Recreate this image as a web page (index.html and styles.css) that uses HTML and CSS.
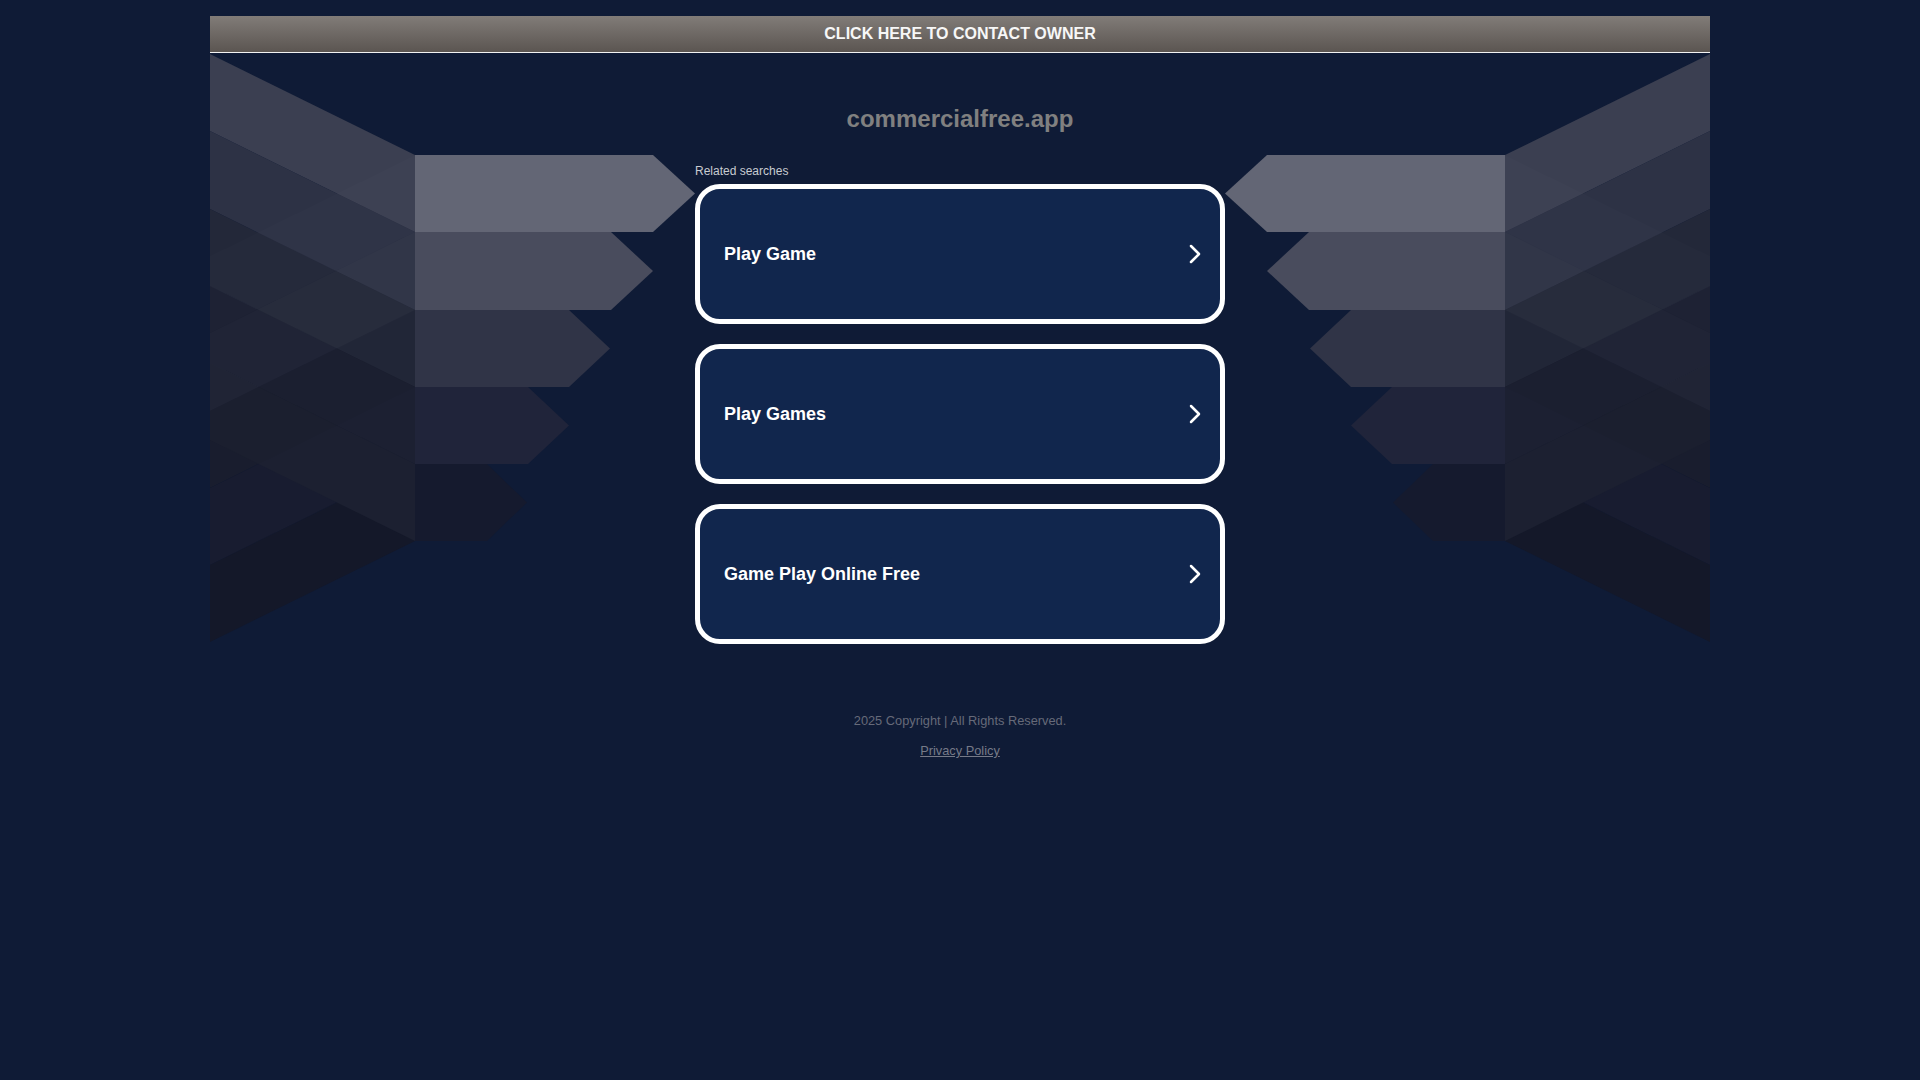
FILE: index.html
```html
<!DOCTYPE html>
<html lang="en">
<head>
<meta charset="utf-8">
<title>commercialfree.app</title>
<link rel="stylesheet" href="styles.css">
</head>
<body>
<div class="page">
  <a class="contact-bar" href="#">CLICK HERE TO CONTACT OWNER</a>
  <div class="stage">
    <svg class="wings" viewBox="210 53 1500 600" width="1500" height="600" aria-hidden="true">
      <defs>
        <g id="wing">
          <!-- up-going panels -->
          <polygon fill="#2a2e42" points="210,256 415,155 415,232 210,333"/>
          <polygon fill="#23273a" points="210,333 415,232 415,310 210,411"/>
          <polygon fill="#1a1e30" points="210,411 415,310 415,387 210,488"/>
          <polygon fill="#181c30" points="210,488 415,387 415,464 210,565"/>
          <polygon fill="#141829" points="210,565 415,464 415,541 210,642"/>
          <!-- down-going panels -->
          <polygon fill="#3b3f51" points="210,54 415,155 415,232 210,131"/>
          <polygon fill="#2d3245" points="210,131 415,232 415,310 210,209"/>
          <polygon fill="#232839" points="210,209 415,310 415,387 210,286"/>
          <polygon fill="#1c2032" points="210,286 415,387 415,464 210,363"/>
          <polygon fill="#1c2031" points="210,363 415,464 415,541 210,440"/>
          <!-- faint up-panel shading over down panels -->
          <polygon fill="#ffffff" fill-opacity="0.012" points="210,256 415,155 415,232 210,333"/>
          <polygon fill="#ffffff" fill-opacity="0.02" points="210,333 415,232 415,310 210,411"/>
          <polygon fill="#000000" fill-opacity="0.03" points="210,411 415,310 415,387 210,488"/>
          <!-- arrow bars -->
          <polygon fill="#636675" points="415,155 653,155 695,193.5 653,232 415,232"/>
          <polygon fill="#494c5d" points="415,232 611,232 653,271 611,310 415,310"/>
          <polygon fill="#303447" points="415,310 569,310 610,348.5 569,387 415,387"/>
          <polygon fill="#20243a" points="415,387 528,387 569,425.5 528,464 415,464"/>
          <polygon fill="#151a2e" points="415,464 487,464 527,502.5 487,541 415,541"/>
        </g>
      </defs>
      <use href="#wing"/>
      <use href="#wing" transform="translate(1920,0) scale(-1,1)"/>
    </svg>

    <div class="content">
      <h1 class="domain">commercialfree.app</h1>
      <div class="column">
        <p class="related">Related searches</p>
        <a class="result" href="#">
          <span class="result-text">Play Game</span>
          <svg class="chev" viewBox="0 0 12 20" width="12" height="20"><path d="M2 2 L10 10 L2 18" fill="none" stroke="#ffffff" stroke-width="2.5" stroke-linecap="round" stroke-linejoin="round"/></svg>
        </a>
        <a class="result" href="#">
          <span class="result-text">Play Games</span>
          <svg class="chev" viewBox="0 0 12 20" width="12" height="20"><path d="M2 2 L10 10 L2 18" fill="none" stroke="#ffffff" stroke-width="2.5" stroke-linecap="round" stroke-linejoin="round"/></svg>
        </a>
        <a class="result" href="#">
          <span class="result-text">Game Play Online Free</span>
          <svg class="chev" viewBox="0 0 12 20" width="12" height="20"><path d="M2 2 L10 10 L2 18" fill="none" stroke="#ffffff" stroke-width="2.5" stroke-linecap="round" stroke-linejoin="round"/></svg>
        </a>
      </div>
      <footer class="footer">
        <p class="copy">2025 Copyright | All Rights Reserved.</p>
        <a class="privacy" href="#">Privacy Policy</a>
      </footer>
    </div>
  </div>
</div>
</body>
</html>
```

FILE: styles.css
```css
html, body {
  margin: 0;
  padding: 0;
}

body {
  background: #0f1b36;
  font-family: "Liberation Sans", Arial, sans-serif;
  min-height: 1080px;
}

.page {
  width: 1500px;
  margin: 16px auto 0;
}

.contact-bar {
  display: block;
  height: 36px;
  line-height: 36px;
  text-align: center;
  background: linear-gradient(to bottom, #817c78, #5b5551);
  border-bottom: 1px solid #f2f2f2;
  color: #f7f7f7;
  font-weight: bold;
  font-size: 16px;
  text-decoration: none;
}

.stage {
  position: relative;
  height: 800px;
}

.wings {
  position: absolute;
  top: 0;
  left: 0;
  z-index: 0;
}

.content {
  position: relative;
  z-index: 1;
  padding-top: 51px;
  display: flex;
  flex-direction: column;
  align-items: center;
}

.domain {
  margin: 0 0 30px;
  font-size: 24px;
  line-height: 30px;
  font-weight: bold;
  color: #808080;
}

.column {
  width: 530px;
  display: flex;
  flex-direction: column;
  gap: 20px;
}

.related {
  margin: 0 0 -14px;
  font-size: 12px;
  line-height: 14px;
  color: #c8cbd1;
}

.result {
  box-sizing: border-box;
  height: 140px;
  border: 5px solid #ffffff;
  border-radius: 25px;
  background: #11264d;
  display: flex;
  align-items: center;
  justify-content: space-between;
  padding: 0 19px 0 24px;
  text-decoration: none;
}

.result-text {
  color: #ffffff;
  font-size: 18px;
  font-weight: bold;
}

.chev {
  display: block;
}

.footer {
  margin-top: 69px;
  display: flex;
  flex-direction: column;
  align-items: center;
  gap: 14px;
}

.copy {
  margin: 0;
  font-size: 12.8px;
  line-height: 16px;
  color: #666a79;
}

.privacy {
  font-size: 12.8px;
  line-height: 16px;
  color: #767a88;
  text-decoration: underline;
}
```
